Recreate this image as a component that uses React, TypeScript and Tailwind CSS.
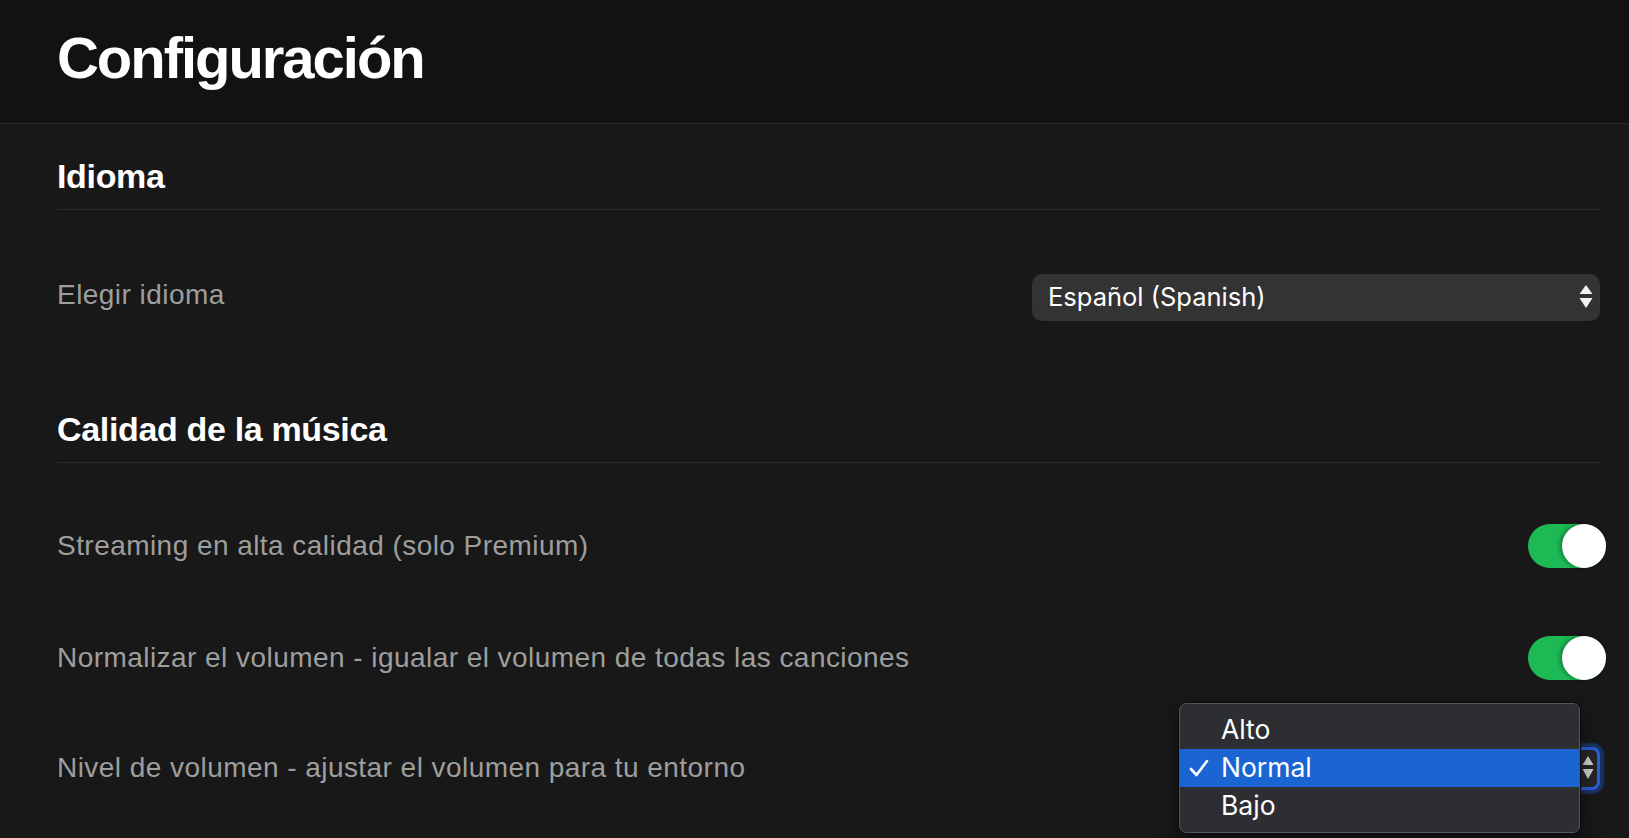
import React from 'react';

const sans = { fontFamily: '"Liberation Sans", Arial, sans-serif' };
const sys = { fontFamily: 'Inter, "Liberation Sans", sans-serif' };

function UpDown({ color = '#f2f2f2', small = false }: { color?: string; small?: boolean }) {
    // two stacked triangles, like a native select arrow
    if (small) {
        return (
            <svg width="12" height="26" viewBox="0 0 12 26">
                <polygon points="6,1 11.5,10 0.5,10" fill={color} />
                <polygon points="0.5,14 11.5,14 6,24" fill={color} />
            </svg>
        );
    }
    return (
        <svg width="14" height="24" viewBox="0 0 14 24">
            <polygon points="7,0 13.5,9 0.5,9" fill={color} />
            <polygon points="0.5,13 13.5,13 7,23" fill={color} />
        </svg>
    );
}

function Toggle() {
    return (
        <div className="-mr-[6px] flex h-[44px] w-[78px] justify-end rounded-full bg-[#1db954]">
            <div className="h-[44px] w-[44px] rounded-full bg-white shadow-[-2px_0_4px_rgba(0,0,0,0.35)]" />
        </div>
    );
}

function SectionTitle({ children, first }: { children: React.ReactNode; first?: boolean }) {
    return (
        <div className={first ? 'mt-[32px]' : 'mt-[59px]'}>
            <h2
                className="h-[54px] border-b border-[#2a2a2a] pb-[13px] text-[34px] font-bold leading-[40px] tracking-[-0.01em] text-white"
                style={sans}
            >
                {children}
            </h2>
        </div>
    );
}

function Row({ label, tall, children }: { label: string; tall?: boolean; children: React.ReactNode }) {
    return (
        <div className={`flex items-center justify-between ${tall ? 'h-[114px]' : 'h-[110px]'}`}>
            <span className="text-[28px] tracking-[0.45px] text-[#9e9e9e]" style={sans}>
                {label}
            </span>
            {children}
        </div>
    );
}

function VolumeSelect() {
    const options = ['Alto', 'Normal', 'Bajo'];
    return (
        <div className="relative mr-[3px] h-[37px] w-[418px]">
            <div className="ml-[14px] flex h-full items-center justify-end rounded-[5px] bg-[#262626] pr-[3px] shadow-[0_0_0_3px_#2a5fd6,0_0_2px_7px_rgba(30,75,170,0.55)]">
                <UpDown color="#cfcfcf" small />
            </div>
            <div className="absolute left-0 top-[-47px] w-[401px] rounded-[7px] border border-[#55565b] bg-[#2d2e32] py-[7px] shadow-[0_0_0_1px_#0b0b0b,0_8px_20px_rgba(0,0,0,0.5)]">
                {options.map((opt) => {
                    const active = opt === 'Normal';
                    return (
                        <div
                            key={opt}
                            className={`flex h-[38px] items-center ${active ? 'bg-[#1b65d3]' : ''}`}
                        >
                            <div className="flex w-[41px] items-center pl-[9px]">
                                {active && (
                                    <svg width="20" height="18" viewBox="0 0 20 18">
                                        <path
                                            d="M2 10 L7.5 16 L18 2"
                                            fill="none"
                                            stroke="white"
                                            strokeWidth="2.6"
                                            strokeLinecap="round"
                                            strokeLinejoin="round"
                                        />
                                    </svg>
                                )}
                            </div>
                            <span className="text-[26.5px] text-white" style={sys}>
                                {opt}
                            </span>
                        </div>
                    );
                })}
            </div>
        </div>
    );
}

export default function App() {
    return (
        <div className="h-[838px] w-full overflow-hidden bg-[#181818]">
            <header className="flex h-[124px] items-center border-b border-[#282828] bg-[#121212] pb-[7px] pl-[57px]">
                <h1 className="text-[58px] font-bold leading-none tracking-[-0.035em] text-white" style={sans}>
                    Configuración
                </h1>
            </header>

            <main className="pl-[57px] pr-[29px]">
                <SectionTitle first>Idioma</SectionTitle>
                <div className="pt-[30px]">
                    <Row label="Elegir idioma">
                        <div className="mt-[4px] flex h-[47px] w-[568px] items-center justify-between rounded-[10px] bg-[#333333] pl-[16px] pr-[7px]">
                            <span className="text-[25.5px] text-white" style={sys}>
                                Español (Spanish)
                            </span>
                            <UpDown />
                        </div>
                    </Row>
                </div>

                <SectionTitle>Calidad de la música</SectionTitle>
                <div className="pt-[26px]">
                    <Row label="Streaming en alta calidad (solo Premium)" tall>
                        <Toggle />
                    </Row>
                    <Row label="Normalizar el volumen - igualar el volumen de todas las canciones">
                        <Toggle />
                    </Row>
                    <Row label="Nivel de volumen - ajustar el volumen para tu entorno">
                        <VolumeSelect />
                    </Row>
                </div>
            </main>
        </div>
    );
}
